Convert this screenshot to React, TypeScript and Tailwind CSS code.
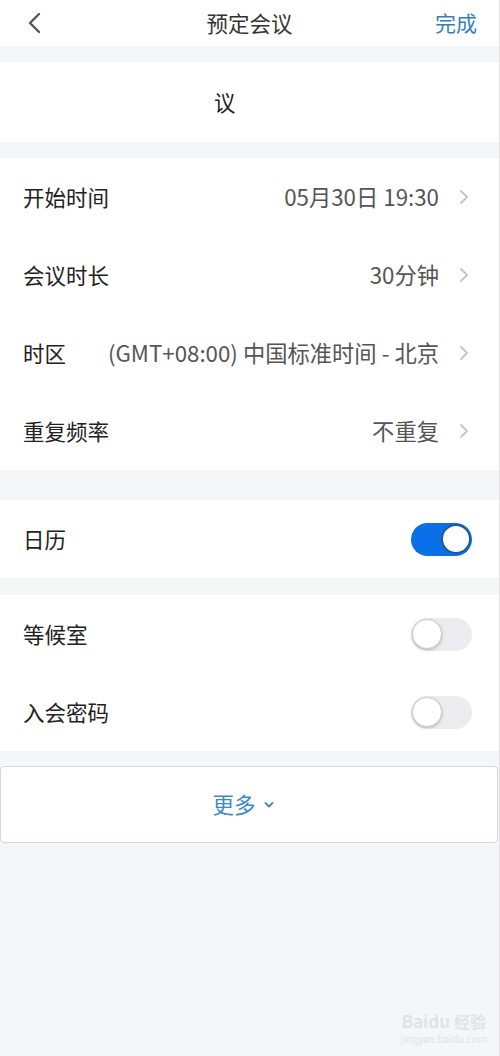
import React from "react";

const font = { fontFamily: '"Noto Sans CJK SC", "Noto Sans", Roboto, sans-serif' };

function Chevron() {
  return (
    <svg width="10" height="16" viewBox="0 0 10 16" className="ml-5 shrink-0">
      <path d="M2 2l6 6-6 6" fill="none" stroke="#c4c4c4" strokeWidth="1.8" strokeLinecap="round" strokeLinejoin="round" />
    </svg>
  );
}

function Toggle({ on }: { on: boolean }) {
  if (on) {
    return (
      <div className="w-[61px] h-[33px] mr-[-3px] rounded-full bg-[#0b6fe8] flex items-center justify-end pr-[1px]">
        <div className="w-[30px] h-[30px] rounded-full bg-white border-2 border-[#1f5a96]" />
      </div>
    );
  }
  return (
    <div className="w-[61px] h-[33px] mr-[-3px] rounded-full bg-[#ececf0] flex items-center pl-[1px]">
      <div className="w-[30px] h-[30px] rounded-full bg-white border border-[#d0d0d4] shadow-[0_1px_3px_rgba(0,0,0,0.25)]" />
    </div>
  );
}

function Row({ label, value, children }: { label: string; value?: string; children?: React.ReactNode }) {
  return (
    <div className="h-[78px] flex items-center pl-[23px] pr-[30px]">
      <span className="text-[21.5px] text-[#222] whitespace-nowrap">{label}</span>
      <div className="flex-1 flex items-center justify-end">
        {value !== undefined ? (
          <>
            <span className="text-[22.3px] text-[#555] whitespace-nowrap">{value}</span>
            <Chevron />
          </>
        ) : (
          children
        )}
      </div>
    </div>
  );
}

export default function App() {
  return (
    <div style={font} className="w-[500px] min-h-[1056px] bg-[#f5f6f8] border-r border-[#e4e4e4] flex flex-col">
      <div className="h-[46px] bg-white flex items-center px-[27px] relative">
        <svg width="14" height="22" viewBox="0 0 14 22">
          <path d="M12 2L3 11l9 9" fill="none" stroke="#555" strokeWidth="2.4" strokeLinecap="round" strokeLinejoin="round" />
        </svg>
        <span className="absolute left-1/2 -translate-x-1/2 text-[21.5px] text-[#333]">预定会议</span>
        <span className="ml-auto mr-[-5px] text-[21px] text-[#3680b8]">完成</span>
      </div>

      <div className="h-[16px]" />
      <div className="h-[80px] bg-white flex items-center pl-[214px]">
        <span className="text-[21.5px] text-[#222]">议</span>
      </div>

      <div className="h-[16px]" />
      <div className="bg-white">
        <Row label="开始时间" value="05月30日 19:30" />
        <Row label="会议时长" value="30分钟" />
        <Row label="时区" value="(GMT+08:00) 中国标准时间 - 北京" />
        <Row label="重复频率" value="不重复" />
      </div>

      <div className="h-[30px]" />
      <div className="bg-white">
        <Row label="日历">
          <Toggle on />
        </Row>
      </div>

      <div className="h-[17px]" />
      <div className="bg-white">
        <Row label="等候室">
          <Toggle on={false} />
        </Row>
        <Row label="入会密码">
          <Toggle on={false} />
        </Row>
      </div>

      <div className="h-[15px]" />
      <div className="h-[77px] bg-white border border-[#d6d6d8] rounded-[4px] mr-[1px] flex items-center justify-center">
        <span className="text-[21.5px] text-[#3b8ac4] ml-[-12px]">更多</span>
        <svg width="10" height="8" viewBox="0 0 10 8" className="ml-[8px]">
          <path d="M1.5 2l3.5 3.5L8.5 2" fill="none" stroke="#3b8ac4" strokeWidth="1.8" strokeLinecap="round" strokeLinejoin="round" />
        </svg>
      </div>

      <div className="flex-1 flex items-end justify-end pr-[12px] pb-[12px]">
        <div className="flex flex-col items-center text-[#e2e3e6]">
          <div className="flex items-end gap-[4px] leading-none">
            <span className="text-[17px] font-bold">Baidu</span>
            <span className="text-[16px] font-bold">经验</span>
          </div>
          <span className="text-[10px] leading-none mt-[5px]">jingyan.baidu.com</span>
        </div>
      </div>
    </div>
  );
}
